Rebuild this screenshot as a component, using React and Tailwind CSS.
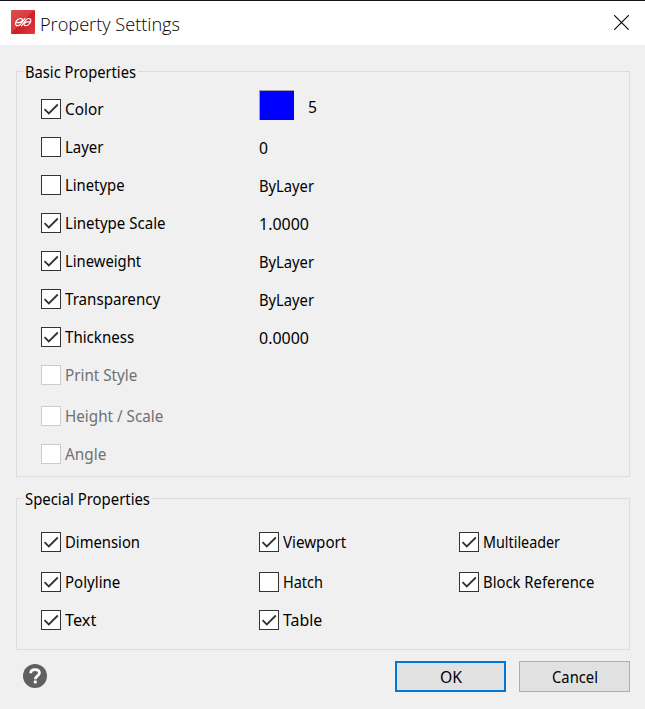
import { useLayoutEffect, useRef, useState } from "react";

// Single-line text, condensed or widened to a fixed advance width.
function Txt({ children, w, className = "" }) {
  const ref = useRef(null);
  const [scale, setScale] = useState(1);
  useLayoutEffect(() => {
    setScale(w / ref.current.getBoundingClientRect().width);
  }, []);
  return (
    <span className={`block h-5 leading-5 whitespace-nowrap ${className}`} style={{ width: w }}>
      <span ref={ref} className="inline-block origin-left" style={{ transform: `scaleX(${scale})` }}>
        {children}
      </span>
    </span>
  );
}

function Check({ label, w, checked, disabled }) {
  return (
    <label className="flex h-5 items-center gap-1">
      <span className={`flex h-5 w-5 shrink-0 border bg-white ${disabled ? "border-[#cccccc]" : "border-[#333333]"}`}>
        {checked && (
          <svg viewBox="0 0 18 18" className="h-[18px] w-[18px]" fill="none" stroke="#333333" strokeWidth="1.8">
            <path d="M2.5 9.2 6.8 13.5 15.8 4.5" />
          </svg>
        )}
      </span>
      <Txt w={w} className={disabled ? "text-[#707070]" : "text-black"}>{label}</Txt>
    </label>
  );
}

function Group({ title, w, className, children }) {
  return (
    <section className={`mx-4 w-[614px] border border-[#dcdcdc] ${className}`}>
      <div className="-mt-[10px] ml-1.5 flex h-5 w-fit bg-[#f0f0f0] pr-[2px] pl-[2px]">
        <Txt w={w}>{title}</Txt>
      </div>
      {children}
    </section>
  );
}

const basic = [
  { label: "Layer", w: 38.5, value: "0", vw: 9 },
  { label: "Linetype", w: 59.5, value: "ByLayer", vw: 55 },
  { label: "Linetype Scale", w: 100.5, value: "1.0000", vw: 50, checked: true },
  { label: "Lineweight", w: 76.2, value: "ByLayer", vw: 55, checked: true },
  { label: "Transparency", w: 95.2, value: "ByLayer", vw: 55, checked: true },
  { label: "Thickness", w: 69.2, value: "0.0000", vw: 50, checked: true },
];

export default function App() {
  return (
    <div className="h-[709px] w-[645px] overflow-hidden border-t border-[#171419] bg-[#f0f0f0] font-['Noto_Sans',sans-serif] text-[16.3px] text-black">
      <header className="flex h-11 items-start bg-white">
        <svg viewBox="0 0 24 24" className="mt-[9px] ml-[11px] h-6 w-6">
          <defs>
            <linearGradient id="red" x1="0" y1="0" x2="1" y2="1">
              <stop offset="0" stopColor="#d9504f" />
              <stop offset=".48" stopColor="#d93a3e" />
              <stop offset=".5" stopColor="#cb1d28" />
              <stop offset="1" stopColor="#e03a3c" />
            </linearGradient>
          </defs>
          <rect width="24" height="24" rx="1" fill="url(#red)" />
          <g fill="none" stroke="#fff" strokeWidth="1.2" strokeLinecap="round" strokeLinejoin="round">
            <path d="M4.6 12.6H8.2C10 12.2 11.6 10.6 11.4 9.4 11.2 8.2 8.6 8.2 6.8 9.6 4.6 11.2 3.9 14 5.2 15.2 6.4 16.2 8.6 15.6 9.8 14L14 8.4" />
            <path d="M10.4 16 14.6 10.4C15.8 8.8 18 8 19.2 8.9 20.5 10 19.8 12.8 17.6 14.6 15.8 16 13.3 16.1 13.1 14.9 12.9 13.6 14.4 12.2 16.2 11.8H19.4" />
          </g>
        </svg>
        <Txt w={140} className="mt-[13px] ml-[5px] font-['Open_Sans','Noto_Sans',sans-serif] text-[18.5px] font-light">Property Settings</Txt>
        <svg viewBox="0 0 15 15" className="mt-[14px] mr-4 ml-auto h-[15px] w-[15px]" stroke="#000" strokeWidth="1.1">
          <path d="M.2.2 14.8 14.8M14.8.2.2 14.8" />
        </svg>
      </header>

      <Group title="Basic Properties" w={111} className="mt-[26px] h-[406px]">
        <div className="mt-[8px] flex h-[30px] pl-6">
          <div className="w-[218px] pt-[9px]">
            <Check label="Color" w={38.5} checked />
          </div>
          <div className="h-[30px] w-[35px] border-t border-l border-[#a0a0a0] bg-[#0000ff]" />
          <Txt w={9} className="mt-[7px] ml-[14px]">5</Txt>
        </div>
        <div className="mt-[17px] flex flex-col gap-[18px] pl-6">
          {basic.map((r) => (
            <div key={r.label} className="flex h-5">
              <div className="w-[218px]">
                <Check label={r.label} w={r.w} checked={r.checked} />
              </div>
              <Txt w={r.vw} className="mt-px">{r.value}</Txt>
            </div>
          ))}
          <Check label="Print Style" w={72.3} disabled />
          <div className="mt-[3px]">
            <Check label="Height / Scale" w={98.3} disabled />
          </div>
          <Check label="Angle" w={41.3} disabled />
        </div>
      </Group>

      <Group title="Special Properties" w={125} className="mt-[21px] h-[152px]">
        <div className="mt-[23px] grid grid-cols-[218px_200px_1fr] grid-rows-[40px_38px_20px] pl-6">
          <Check label="Dimension" w={75} checked />
          <Check label="Viewport" w={63.3} checked />
          <Check label="Multileader" w={77} checked />
          <Check label="Polyline" w={55.3} checked />
          <Check label="Hatch" w={40} />
          <Check label="Block Reference" w={111.3} checked />
          <Check label="Text" w={31.3} checked />
          <Check label="Table" w={39.3} checked />
        </div>
      </Group>

      <footer className="mt-[11px] flex pr-[15px] pl-[23px]">
        <svg viewBox="0 0 24 24" className="mt-[3px] h-6 w-6">
          <circle cx="12" cy="12" r="12" fill="#606060" />
          <path d="M7.7 9.2C7.8 6.8 9.5 5.6 12 5.6S16.4 6.9 16.4 9C16.4 11.8 12.3 11.8 12.3 15.2" fill="none" stroke="#fff" strokeWidth="2.8" />
          <rect x="10.8" y="16.6" width="3" height="3" rx=".8" fill="#fff" />
        </svg>
        <button className="ml-auto flex h-[31px] w-[111px] items-center justify-center border-2 border-[#0078d7] bg-[#e1e1e1]">
          <Txt w={22}>OK</Txt>
        </button>
        <button className="ml-[13px] flex h-[31px] w-[111px] items-center justify-center border border-[#adadad] bg-[#e1e1e1]">
          <Txt w={46} className="-mr-px">Cancel</Txt>
        </button>
      </footer>
    </div>
  );
}
